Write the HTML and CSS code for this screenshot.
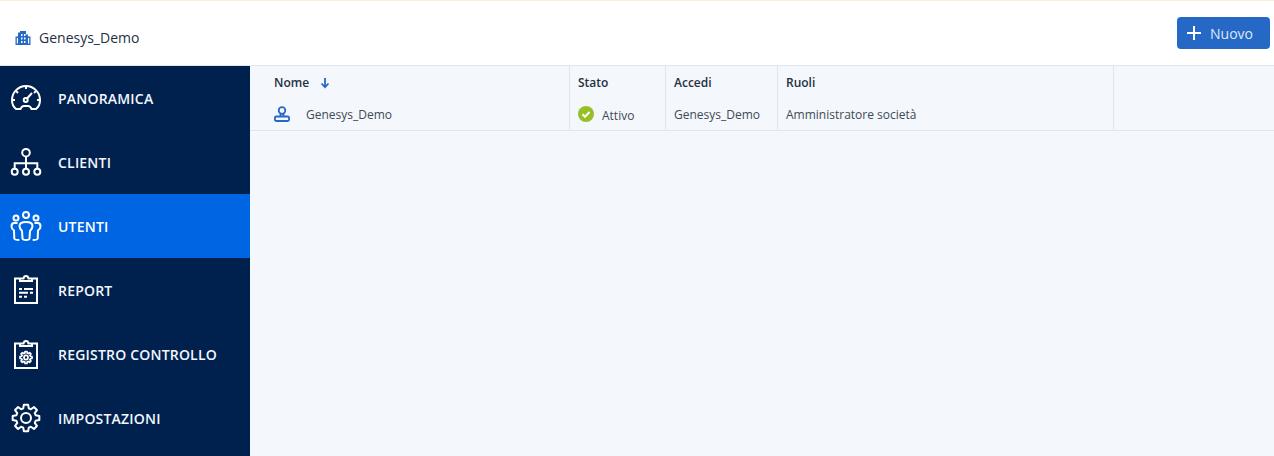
FILE: index.html
```html
<!DOCTYPE html>
<html lang="it">
<head>
<meta charset="utf-8">
<title>Utenti</title>
<link rel="stylesheet" href="styles.css">
</head>
<body>
<header class="topbar">
  <div class="tenant">
    <svg class="tenant-icon" width="16" height="16" viewBox="0 0 16 16"><path fill="#2668c5" fill-rule="evenodd" d="M.5 15V6.500H3V2.500h2V1h6v3.500h2V6.500h2.500V15zM6 4v2h1.500V4zM9 4v2h1.500V4zM6 7.500v2h1.500v-2zM9 7.500v2h1.500v-2zM6 11v2h1.500v-2zM9 11v2h1.500v-2zM1.800 8v5.500H3V8zM13 8v5.500h1.200V8z"/></svg>
    <span>Genesys_Demo</span>
  </div>
  <button class="new-btn" type="button">
    <svg width="16" height="16" viewBox="0 0 16 16"><path d="M8 1v14M1 8h14" stroke="#fff" stroke-width="2" fill="none"/></svg>
    <span>Nuovo</span>
  </button>
</header>
<div class="main">
  <nav class="sidebar">
    <a class="nav-item"><svg class="nav-icon" viewBox="0 0 32 32" fill="none" stroke="#fff" stroke-width="2"><path d="M6 27C3.500 25 2 21.500 2 18 2 10.300 8.300 4 16 4s14 6.300 14 14c0 3.500-1.500 7-4 9h-4.500c-.8-2-1.800-3-3.500-3h-4c-1.700 0-2.700 1-3.500 3z"/><circle cx="15.700" cy="18" r="2"/><path d="M17 16.500l5-5.500M16 4v3M2 18h3M30 18h-3M6 9l2 2M26 9l-2 2"/></svg><span>PANORAMICA</span></a>
    <a class="nav-item"><svg class="nav-icon" viewBox="0 0 32 32" fill="none" stroke="#fff" stroke-width="2"><circle cx="16" cy="6.700" r="3.800"/><path d="M16 10.500V22.500M4.700 22.700v-5.400h22.600v5.400"/><circle cx="4.700" cy="25.700" r="3"/><circle cx="16" cy="25.700" r="3"/><circle cx="27.300" cy="25.700" r="3"/></svg><span>CLIENTI</span></a>
    <a class="nav-item active"><svg class="nav-icon" viewBox="0 0 32 32" fill="none" stroke="#fff" stroke-width="2"><circle cx="16" cy="5" r="3"/><circle cx="6" cy="8" r="2.500"/><circle cx="26" cy="8" r="2.500"/><path d="M16 12c-4 0-6.500 1-6.500 4 0 2.500 1.500 4 2.500 5l.5 7.500c.1 1.300 1 1.500 3.500 1.500s3.400-.2 3.500-1.500l.5-7.500c1-1 2.500-2.500 2.500-5 0-3-2.500-4-6.500-4z"/><path d="M7.500 13H4C2.500 13 1.500 14.500 1.500 16.500c0 2 1 3 2.500 4l.3 8c.1 1.200 2 1.500 5 1.500M24.500 13H28c1.500 0 2.500 1.500 2.500 3.500 0 2-1 3-2.500 4l-.3 8c-.1 1.200-2 1.500-5 1.500"/></svg><span>UTENTI</span></a>
    <a class="nav-item"><svg class="nav-icon" viewBox="0 0 32 32" fill="none" stroke="#fff" stroke-width="2"><path d="M10 4.500H5V29h22V4.500h-5M10 7V4.500h3.500c.3-2 1-2.500 2.500-2.500s2.200.5 2.500 2.500H22V7z"/><path d="M9 15h3M14 15h9M9 18.700h9M20 18.700h3M9 22.700h3M14 22.700h3"/></svg><span>REPORT</span></a>
    <a class="nav-item"><svg class="nav-icon" viewBox="0 0 32 32" fill="none" stroke="#fff" stroke-width="2"><path d="M10 5.500H5V30h22V5.500h-5M10 8V5.500h3.500c.3-2 1-2.500 2.500-2.500s2.200.5 2.500 2.500H22V8z"/><g transform="translate(8.800 12.300) scale(.45)" stroke-width="3.800"><circle cx="16" cy="16" r="4.500"/><path class="gear" d="M13.240 6.390L13.890 2.670H18.110L18.760 6.390L20.850 7.250L23.940 5.080L26.920 8.060L24.750 11.150L25.610 13.240L29.330 13.890V18.110L25.610 18.760L24.750 20.850L26.920 23.940L23.940 26.920L20.850 24.750L18.760 25.610L18.110 29.330H13.890L13.240 25.610L11.150 24.750L8.060 26.920L5.080 23.940L7.250 20.850L6.390 18.760L2.670 18.110V13.890L6.390 13.240L7.250 11.150L5.080 8.060L8.060 5.080L11.150 7.250Z"/></g></svg><span>REGISTRO CONTROLLO</span></a>
    <a class="nav-item"><svg class="nav-icon" viewBox="0 0 32 32" fill="none" stroke="#fff" stroke-width="2"><circle cx="16" cy="16" r="5"/><path class="gear" d="M13.240 6.390L13.890 2.670H18.110L18.760 6.390L20.850 7.250L23.940 5.080L26.920 8.060L24.750 11.150L25.610 13.240L29.330 13.890V18.110L25.610 18.760L24.750 20.850L26.920 23.940L23.940 26.920L20.850 24.750L18.760 25.610L18.110 29.330H13.890L13.240 25.610L11.150 24.750L8.060 26.920L5.080 23.940L7.250 20.850L6.390 18.760L2.670 18.110V13.890L6.390 13.240L7.250 11.150L5.080 8.060L8.060 5.080L11.150 7.250Z"/></svg><span>IMPOSTAZIONI</span></a>
  </nav>
  <section class="content">
    <div class="table">
      <div class="row head">
        <div class="cell col-name"><span>Nome</span><svg class="sort" width="10" height="12" viewBox="0 0 10 12"><path d="M5 1v9M1.500 6.500L5 10.200l3.500-3.700" stroke="#2668c5" stroke-width="1.800" fill="none"/></svg></div>
        <div class="cell col-state">Stato</div>
        <div class="cell col-login">Accedi</div>
        <div class="cell col-role">Ruoli</div>
        <div class="cell col-rest"></div>
      </div>
      <div class="row body">
        <div class="cell col-name"><svg class="user-icon" width="16" height="16" viewBox="0 0 16 16" fill="none" stroke="#2668c5" stroke-width="1.800"><circle cx="8" cy="4.500" r="3.300"/><path d="M6.500 8v2.500M9.500 8v2.500"/><rect x=".9" y="10.500" width="14.200" height="4.500" rx="1.500"/></svg><span>Genesys_Demo</span></div>
        <div class="cell col-state"><svg class="ok" width="16" height="16" viewBox="0 0 16 16"><circle cx="8" cy="8" r="8" fill="#97bf26"/><path d="M4.500 8.200l2.500 2.500 4.500-4.700" stroke="#fff" stroke-width="2" fill="none"/></svg><span class="state-text">Attivo</span></div>
        <div class="cell col-login">Genesys_Demo</div>
        <div class="cell col-role">Amministratore società</div>
        <div class="cell col-rest"></div>
      </div>
    </div>
  </section>
</div>
</body>
</html>
```
FILE: styles.css
```css
* { box-sizing: border-box; }
html, body { margin: 0; height: 100%; }
body {
  font-family: "Open Sans", sans-serif;
  background: #f4f7fc;
  color: #404a55;
  overflow: hidden;
  height: 456px;
}
.topbar {
  height: 66px;
  background: #fff;
  border-top: 1px solid #fdeed9;
  border-bottom: 1px solid #dde7f3;
  display: flex;
  align-items: center;
  justify-content: space-between;
  padding: 0 4px 1px 15px;
}
.tenant {
  display: flex;
  align-items: center;
  gap: 8px;
  font-size: 14px;
  color: #243143;
  margin-top: 10px;
}
.new-btn {
  width: 93px;
  height: 32px;
  background: #2668c5;
  border: 0;
  border-radius: 4px;
  color: #dce8f8;
  font: 14px "Open Sans", sans-serif;
  display: flex;
  align-items: center;
  gap: 8px;
  padding: 0 0 0 9px;
  margin-top: 1px;
}
.main { display: flex; height: 390px; }
.sidebar {
  width: 250px;
  flex: none;
  background: #00204d;
}
.nav-item {
  height: 64px;
  display: flex;
  align-items: center;
  gap: 16px;
  padding-left: 10px;
  color: #f2f7ff;
  font-size: 14px;
  font-weight: 600;
  letter-spacing: .2px;
}
.nav-item.active { background: #0065e3; color: #fff; }
.nav-icon { width: 32px; height: 32px; flex: none; }
.gear { stroke-linejoin: round; }
.content { flex: 1; }
.row { display: flex; }
.row.head { height: 32px; }
.row.body { height: 33px; border-bottom: 1px solid #dde7f3; }
.cell {
  display: flex;
  align-items: center;
  padding-left: 8px;
  font-size: 12px;
  border-right: 1px solid #dde7f3;
  color: #404a55;
}
.head .cell { font-weight: 600; color: #243143; }
.col-name { width: 320px; padding-left: 24px; }
.col-state { width: 96px; }
.col-login { width: 112px; }
.col-role { width: 336px; }
.col-rest { flex: 1; border-right: 0; }
.sort { margin-left: 11px; margin-top: 2px; }
.user-icon { margin-right: 16px; }
.ok { margin-right: 8px; }
.state-text { margin-top: 2px; }
```
